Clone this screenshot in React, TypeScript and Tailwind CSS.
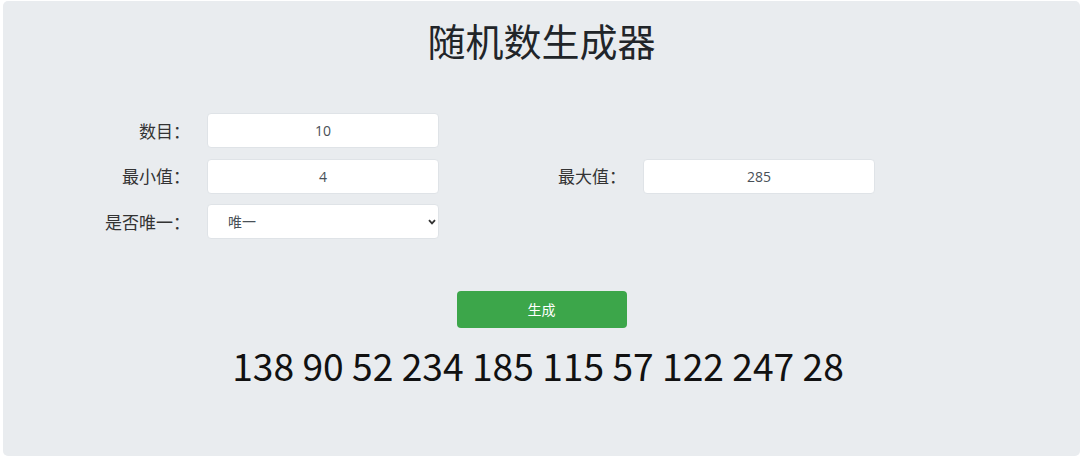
import React from "react";

function Label({ children }: { children: React.ReactNode }) {
  return (
    <div className="flex items-center justify-end text-[17px] text-[#333] h-[35px] [font-family:'Noto_Sans_CJK_SC',sans-serif]">
      {children}
    </div>
  );
}

function Field({ value }: { value: string }) {
  return (
    <input
      readOnly
      value={value}
      className="h-[35px] w-[232px] rounded-[4px] border border-[#dfe3e7] bg-white text-center text-[14px] text-[#495057] outline-none"
    />
  );
}

export default function App() {
  return (
    <div className="bg-white w-[1080px] h-[457px] pl-[3px] pt-[1px] [font-family:'Open_Sans','Noto_Sans_CJK_SC',sans-serif]">
      <div className="bg-[#e9ecef] h-[455px] rounded-[5px] flex flex-col">
        <h1 className="text-center text-[38px] leading-[50px] text-[#212529] mt-[14px] [font-family:'Noto_Sans_CJK_SC',sans-serif]">
          随机数生成器
        </h1>
        <div className="mt-[48px] grid grid-cols-[187px_232px_170px_232px] gap-x-[17px] gap-y-[10.5px] items-center">
          <Label>数目：</Label>
          <Field value="10" />
          <div />
          <div />
          <Label>最小值：</Label>
          <Field value="4" />
          <Label>最大值：</Label>
          <Field value="285" />
          <Label>是否唯一：</Label>
          <div className="relative h-[35px] w-[232px]">
            <select
              className="appearance-none h-[35px] w-[232px] rounded-[4px] border border-[#dfe3e7] bg-white pl-[20px] text-[14px] text-[#495057] outline-none"
              defaultValue="唯一"
            >
              <option>唯一</option>
              <option>不唯一</option>
            </select>
            <svg
              className="absolute right-[3px] top-[15px] pointer-events-none"
              width="8"
              height="6"
              viewBox="0 0 8 6"
            >
              <path d="M1 1.2 L4 4.4 L7 1.2" fill="none" stroke="#333" strokeWidth="1.8" />
            </svg>
          </div>
        </div>
        <div className="mt-[52px] flex justify-center">
          <button className="w-[170px] h-[37px] rounded-[4px] bg-[#3ca64a] text-white text-[14px]">
            生成
          </button>
        </div>
        <div className="mt-[12px] mr-[7px] text-center text-[37.2px] leading-[50px] text-[#111] [font-family:'Noto_Sans_CJK_SC',sans-serif]">
          138 90 52 234 185 115 57 122 247 28
        </div>
      </div>
    </div>
  );
}
